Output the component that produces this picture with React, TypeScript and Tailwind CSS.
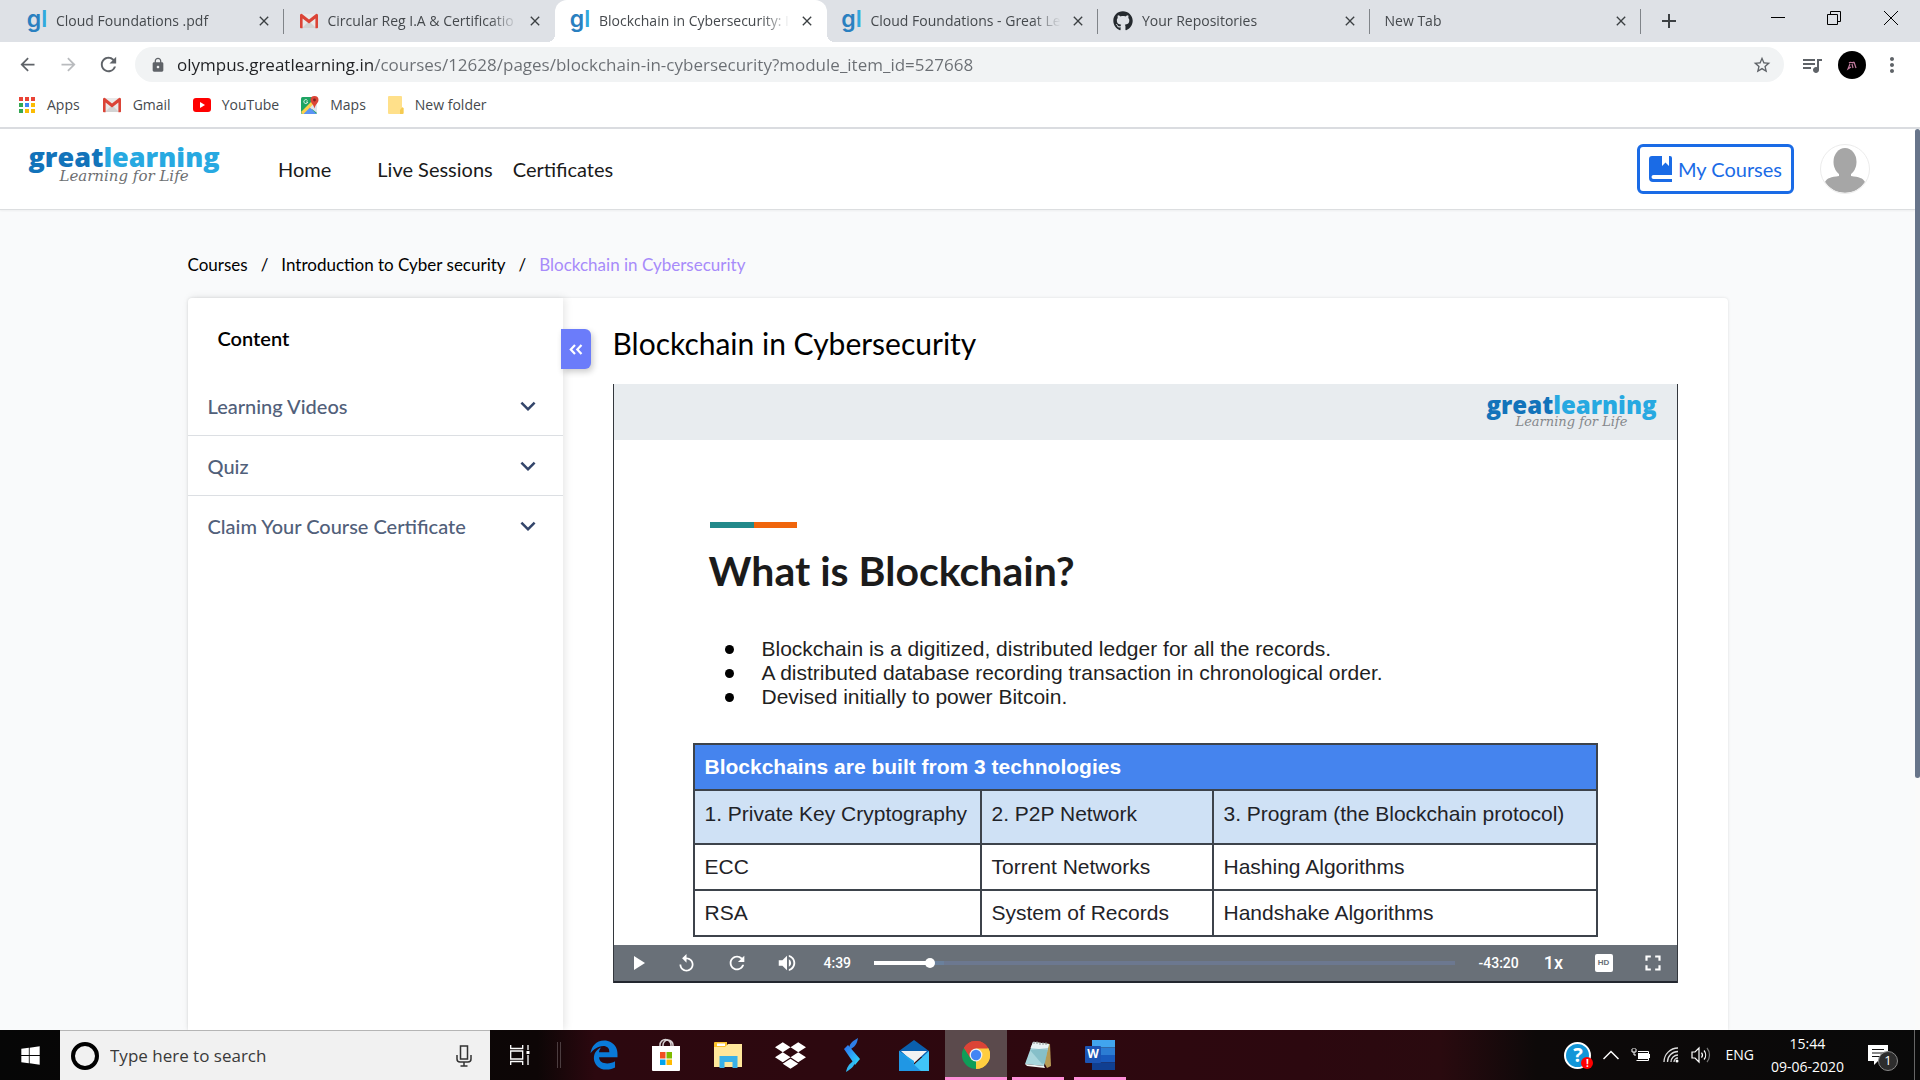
import React from "react";
import { FaGithub, FaDropbox, FaWindows } from "react-icons/fa";
import { FaEdgeLegacy } from "react-icons/fa6";
import {
  MdArrowBack, MdArrowForward, MdRefresh, MdLock, MdStarBorder, MdQueueMusic, MdMoreVert,
  MdReplay, MdVolumeUp, MdPlayArrow, MdFullscreen, MdClose, MdAdd, MdKeyboardArrowDown,
} from "react-icons/md";

const UI = "font-['Open_Sans',sans-serif]";

/* ---------- logos ---------- */

function GlMark() {
  return (
    <span aria-hidden="true" className="flex h-6 w-5 shrink-0 items-center justify-center pb-1 font-['Inter',sans-serif] text-[23px] leading-5 font-semibold">
      <span className="text-[#2a80c0]">g</span>
      <span className="text-[#2fa9dd]">l</span>
    </span>
  );
}

function GmailIcon() {
  return (
    <svg viewBox="0 0 20 16" className="h-4 w-5 shrink-0" aria-hidden="true">
      <rect x="1" y="1" width="18" height="14" rx="1" fill="#e9e9e9" />
      <path d="M3 15 10 8l7 7z" fill="#d3d3d3" />
      <path d="M1 2v12.5a.8.8 0 0 0 .8.8H3.6V5.4L10 10.4l6.4-5v9.9h1.8a.8.8 0 0 0 .8-.8V2a1.3 1.3 0 0 0-2-1L10 6.4 3 1a1.3 1.3 0 0 0-2 1z" fill="#db4437" />
    </svg>
  );
}

function AppsIcon() {
  const colors = ["#ea4335", "#ea4335", "#ea4335", "#34a853", "#4285f4", "#fbbc04", "#34a853", "#fbbc04", "#fbbc04"];
  return (
    <svg viewBox="0 0 17 17" className="h-[17px] w-[17px] shrink-0" aria-hidden="true">
      {colors.map((c, i) => (
        <rect key={i} x={(i % 3) * 6} y={Math.floor(i / 3) * 6} width="4" height="4" fill={c} />
      ))}
    </svg>
  );
}

function YouTubeIcon() {
  return (
    <svg viewBox="0 0 18 14" className="h-3.5 w-[18px] shrink-0" aria-hidden="true">
      <rect width="18" height="14" rx="3" fill="#f00" />
      <path d="M7 4v6l5-3z" fill="#fff" />
    </svg>
  );
}

function MapsIcon() {
  return (
    <svg viewBox="0 0 18 18" className="h-[18px] w-[18px] shrink-0" aria-hidden="true">
      <rect x="0" y="1" width="16" height="17" rx="1.5" fill="#1fa463" />
      <path d="M0 16 14 2l2 2v5L5 18H1.500z" fill="#ffd04b" />
      <path d="M2.500 18 9 11.500 15.500 18z" fill="#5b93f5" />
      <path d="M9 11.500 14 6.500l2 1V17z" fill="#dfe5ee" />
      <path d="M6.500 4.500a2 2 0 1 0 .3 1.500H5" fill="none" stroke="#fff" strokeWidth=".8" />
      <path d="M13.500 0a4 4 0 0 1 4 4c0 3-3 4-4 8.500-1-4.500-4-5.500-4-8.500a4 4 0 0 1 4-4z" fill="#db4437" />
      <circle cx="13.500" cy="4" r="1.400" fill="#7b231e" />
    </svg>
  );
}

function FolderIcon() {
  return (
    <svg viewBox="0 0 16 18" className="h-[18px] w-4 shrink-0" aria-hidden="true">
      <path d="M1 0h12a1 1 0 0 1 1 1v10l1.500 1v5a1 1 0 0 1-1 1H1a1 1 0 0 1-1-1V1a1 1 0 0 1 1-1z" fill="#ffe08a" />
      <path d="M12 18v-4l2-2.500L15.500 12v5a1 1 0 0 1-1 1z" fill="#f5cb52" />
    </svg>
  );
}

function ChromeIcon() {
  return (
    <svg viewBox="0 0 48 48" className="h-7 w-7" aria-hidden="true">
      <path d="M24 24 3.200 12A24 24 0 0 1 44.800 12z" fill="#db4437" />
      <path d="M24 24 44.800 12A24 24 0 0 1 24 48z" fill="#ffcd40" />
      <path d="M24 24v24A24 24 0 0 1 3.200 12z" fill="#0f9d58" />
      <path d="M24 13h20.200l.6-1A24 24 0 0 0 3.200 12l11.300 17.500z" fill="#db4437" />
      <path d="M24 13h21.300A24 24 0 0 1 24 48l9.500-18.500z" fill="#ffcd40" />
      <circle cx="24" cy="24" r="11" fill="#f1f1f1" />
      <circle cx="24" cy="24" r="8.800" fill="#4285f4" />
    </svg>
  );
}

function GreatLearningLogo({ small = false }: { small?: boolean }) {
  return (
    <div className="flex flex-col items-center">
      <div className={small ? "font-['Open_Sans',sans-serif] text-2xl leading-5 font-extrabold" : "font-['Open_Sans',sans-serif] text-[27px] leading-[22px] font-extrabold"}>
        <span className="text-[#1273ba]">great</span>
        <span className="text-[#27a9e1]">learning</span>
      </div>
      <div className={small ? "font-['DejaVu_Serif',serif] text-[13px] leading-[14px] text-[#85888c] italic" : "font-['DejaVu_Serif',serif] text-[15px] leading-4 text-[#6d6f72] italic"}>
        Learning for Life
      </div>
    </div>
  );
}

/* ---------- browser chrome ---------- */

type Tab = { title: string; icon: React.ReactNode; active?: boolean; divider?: boolean };

const tabs: Tab[] = [
  { title: "Cloud Foundations .pdf", icon: <GlMark />, divider: true },
  { title: "Circular Reg I.A & Certificatio", icon: <GmailIcon /> },
  { title: "Blockchain in Cybersecurity: I", icon: <GlMark />, active: true },
  { title: "Cloud Foundations - Great Le", icon: <GlMark />, divider: true },
  { title: "Your Repositories", icon: <FaGithub className="h-5 w-5 shrink-0 text-[#24292e]" />, divider: true },
  { title: "New Tab", icon: null, divider: true },
];

function TabStrip() {
  return (
    <div className="flex h-[42px] items-stretch bg-[#dee1e6] pl-3">
      <div className="flex w-[1629px] shrink">
        {tabs.map((t) => (
          <div
            key={t.title}
            className={
              t.active
                ? "relative flex min-w-0 flex-1 items-center gap-[9px] rounded-t-xl bg-white pr-3 pl-[15px]"
                : "relative flex min-w-0 flex-1 items-center gap-[9px] pr-3 pl-[15px]"
            }
          >
            {t.active && (
              <>
                <span className="absolute bottom-0 -left-2 h-2 w-2 bg-[radial-gradient(circle_at_0_0,transparent_8px,#fff_8px)]" />
                <span className="absolute -right-2 bottom-0 h-2 w-2 bg-[radial-gradient(circle_at_100%_0,transparent_8px,#fff_8px)]" />
              </>
            )}
            {t.icon}
            <span className="min-w-0 flex-1 overflow-hidden mask-r-from-85% text-sm whitespace-nowrap text-[#45494d]">{t.title}</span>
            <button aria-label={`Close ${t.title}`} className="shrink-0 text-[#3c4043]">
              <MdClose className="h-4 w-4" />
            </button>
            {t.divider && <span className="absolute right-0 h-[25px] w-px bg-[#808489]" />}
          </div>
        ))}
      </div>
      <button aria-label="New tab" className="ml-4 text-[#3c4043]">
        <MdAdd className="h-6 w-6" />
      </button>
      <div className="ml-auto flex items-start">
        <button aria-label="Minimize" className="flex h-9 w-14 items-center justify-center">
          <svg viewBox="0 0 14 14" className="h-3.5 w-3.5"><path d="M0 6.500h14" stroke="#000" /></svg>
        </button>
        <button aria-label="Restore" className="flex h-9 w-14 items-center justify-center">
          <svg viewBox="0 0 14 14" className="h-3.5 w-3.5" fill="none" stroke="#000"><path d="M.5 3.500h10v10H.5zM3.500 3.500v-3h10v10h-3" /></svg>
        </button>
        <button aria-label="Close window" className="flex h-9 w-[58px] items-center justify-center">
          <svg viewBox="0 0 14 14" className="h-3.5 w-3.5"><path d="M0 0 14 14M14 0 0 14" stroke="#000" /></svg>
        </button>
      </div>
    </div>
  );
}

function Toolbar() {
  return (
    <div className="flex h-[45px] items-center bg-white pr-4 pl-[17px] text-[#5f6368]">
      <button aria-label="Back" className="mr-5"><MdArrowBack className="h-[21px] w-[21px]" /></button>
      <button aria-label="Forward" className="mr-[18px] text-[#b9bbbe]"><MdArrowForward className="h-[21px] w-[21px]" /></button>
      <button aria-label="Reload" className="mr-[15px]"><MdRefresh className="h-[23px] w-[23px]" /></button>
      <div className="flex h-[35px] flex-1 items-center rounded-full bg-[#f1f3f4] pr-3 pl-[15px]">
        <MdLock className="mr-[11px] h-4 w-4 shrink-0" />
        <input
          aria-label="Address"
          readOnly
          value="olympus.greatlearning.in/courses/12628/pages/blockchain-in-cybersecurity?module_item_id=527668"
          className="min-w-0 flex-1 bg-[linear-gradient(to_right,#202124_198px,#6a6e73_198px)] bg-clip-text text-[17px] text-transparent outline-none"
        />
        <button aria-label="Bookmark this page"><MdStarBorder className="h-5 w-5" /></button>
      </div>
      <button aria-label="Media" className="ml-4"><MdQueueMusic className="h-6 w-6" /></button>
      <button aria-label="Profile" className="ml-3.5 flex h-7 w-7 items-center justify-center rounded-full bg-black">
        <svg viewBox="0 0 12 12" className="h-3 w-3" fill="none" stroke="#c07b9e" strokeWidth="1.200">
          <path d="M3 4c2-2 3 1 5-1M4 5l-2 5 3-2M8 3l2 6M6 5l1 4" />
        </svg>
      </button>
      <button aria-label="Menu" className="ml-3.5"><MdMoreVert className="h-6 w-6" /></button>
    </div>
  );
}

function Bookmarks() {
  const link = "flex items-center gap-[11px] text-sm text-[#45494d]";
  return (
    <nav aria-label="Bookmarks" className="flex h-[42px] items-center gap-[22px] border-b-2 border-[#dadce0] bg-white pb-1 pl-[19px]">
      <a href="#apps" className={link}><AppsIcon />Apps</a>
      <a href="#gmail" className={link}><GmailIcon />Gmail</a>
      <a href="#youtube" className={link}><YouTubeIcon />YouTube</a>
      <a href="#maps" className={link}><MapsIcon />Maps</a>
      <a href="#folder" className={link}><FolderIcon />New folder</a>
    </nav>
  );
}

/* ---------- page ---------- */

function SiteHeader() {
  return (
    <header className="flex h-[81px] shrink-0 items-center border-b border-[#dcdee0] bg-white pr-[45px] pl-[29px] shadow-xs">
      <a href="#home" className="w-[190px] pb-2"><GreatLearningLogo /></a>
      <nav className="ml-[59px] flex text-xl text-[#1a1a1a]">
        <a href="#home" className="mr-[46px]">Home</a>
        <a href="#live" className="mr-5">Live Sessions</a>
        <a href="#certificates">Certificates</a>
      </nav>
      <button className="ml-auto flex h-[50px] items-center gap-[5px] rounded-md border-3 border-[#1a6be6] px-[9px] text-xl text-[#1a6be6]">
        <svg viewBox="0 0 24 26" className="h-[26px] w-6" fill="#1a6be6" aria-hidden="true">
          <path d="M3 0h10v10l3.500-3.500L20 10V0h1a2 2 0 0 1 2 2v17H4.500a2 2 0 0 0 0 4H23v3H4a4 4 0 0 1-4-4V3a3 3 0 0 1 3-3z" />
        </svg>
        My Courses
      </button>
      <button aria-label="Account" className="ml-[26px] h-[50px] w-[50px] overflow-hidden rounded-full border border-[#ececec] bg-white">
        <svg viewBox="0 0 48 48" className="h-12 w-12" fill="#a6a6a6" aria-hidden="true">
          <ellipse cx="24" cy="17" rx="11.500" ry="14" />
          <path d="M18 27h12v4c8 1 12 2 14 6A24 24 0 0 1 4 37c2-4 6-5 14-6z" />
        </svg>
      </button>
    </header>
  );
}

function Sidebar() {
  return (
    <aside className="w-[375px] shrink-0 rounded-tl shadow-[2px_0_8px_rgba(0,0,0,0.1)]">
      <h2 className="px-[30px] pt-7 pb-[26px] text-xl leading-6 font-semibold text-black">Content</h2>
      <ul>
        {["Learning Videos", "Quiz", "Claim Your Course Certificate"].map((label) => (
          <li key={label} className="border-b border-[#dcdfe3] last:border-b-0">
            <button className="flex h-[59px] w-full items-center justify-between pr-5 pl-5 text-xl font-medium text-[#51607a]">
              {label}
              <MdKeyboardArrowDown className="h-[30px] w-[30px] text-[#33456a]" />
            </button>
          </li>
        ))}
      </ul>
    </aside>
  );
}

function SlideTable() {
  const cell = "border-2 border-[#3d434b] px-2.5";
  return (
    <table className="mt-[34px] w-full table-fixed border-collapse text-left text-[21px] leading-6 text-[#1f2328]">
      <colgroup>
        <col className="w-[287px]" />
        <col className="w-[232px]" />
        <col />
      </colgroup>
      <thead>
        <tr className="h-[46px] bg-[#4584ee] text-white">
          <th colSpan={3} className={cell + " font-bold"}>Blockchains are built from 3 technologies</th>
        </tr>
        <tr className="h-[54px] bg-[#cfe1f5]">
          <th className={cell + " pb-1.5 font-normal whitespace-nowrap"}>1. Private Key Cryptography</th>
          <th className={cell + " pb-1.5 font-normal"}>2. P2P Network</th>
          <th className={cell + " pb-1.5 font-normal"}>3. Program (the Blockchain protocol)</th>
        </tr>
      </thead>
      <tbody>
        <tr className="h-[46px]">
          <td className={cell}>ECC</td>
          <td className={cell}>Torrent Networks</td>
          <td className={cell}>Hashing Algorithms</td>
        </tr>
        <tr className="h-[46px]">
          <td className={cell}>RSA</td>
          <td className={cell}>System of Records</td>
          <td className={cell}>Handshake Algorithms</td>
        </tr>
      </tbody>
    </table>
  );
}

function PlayerControls() {
  return (
    <div className="flex h-[38px] items-center border-b-2 border-[#23272f] bg-[#697078] text-white">
      <button aria-label="Play" className="flex w-12 justify-center"><MdPlayArrow className="h-6 w-6" /></button>
      <button aria-label="Back 10 seconds" className="flex w-[50px] justify-center"><MdReplay className="h-[21px] w-[21px]" /></button>
      <button aria-label="Forward 10 seconds" className="flex w-[50px] justify-center"><MdRefresh className="h-[22px] w-[22px]" /></button>
      <button aria-label="Volume" className="flex w-[50px] justify-center"><MdVolumeUp className="h-[22px] w-[22px]" /></button>
      <span className="w-[62px] pl-3 font-['Roboto',sans-serif] text-sm font-medium">4:39</span>
      <input
        type="range"
        aria-label="Seek"
        defaultValue={9}
        className="h-1 min-w-0 flex-1 appearance-none bg-[linear-gradient(to_right,#fff_9.7%,#6a809c_9.7%,#6a809c_12%,#6c7890_12%)] [&::-webkit-slider-thumb]:h-2.5 [&::-webkit-slider-thumb]:w-2.5 [&::-webkit-slider-thumb]:appearance-none [&::-webkit-slider-thumb]:rounded-full [&::-webkit-slider-thumb]:bg-white"
      />
      <span className="w-[74px] pl-6 font-['Roboto',sans-serif] text-sm font-medium">-43:20</span>
      <button className="w-[50px] font-['Roboto',sans-serif] text-lg font-medium">1x</button>
      <button className="flex w-[50px] justify-center">
        <span className="flex h-[18px] w-[18px] items-center justify-center rounded-xs bg-white font-['Liberation_Sans',sans-serif] text-[8px] font-bold text-[#697078]">HD</span>
      </button>
      <button aria-label="Full screen" className="flex w-12 justify-center"><MdFullscreen className="h-[26px] w-[26px]" /></button>
    </div>
  );
}

function Player() {
  return (
    <section aria-label="Video" className="mt-5 border-x border-[#33373d]">
      <div className="flex h-14 items-start justify-end bg-[#e8ecef] pt-[11px] pr-5">
        <GreatLearningLogo small />
      </div>
      <div className="flex h-[505px] flex-col bg-white px-[79px] font-['Liberation_Sans',sans-serif]">
        <div className="mt-[82px] ml-[17px] flex h-1.5">
          <span className="w-11 bg-[#22898a]" />
          <span className="w-[43px] bg-[#f0650c]" />
        </div>
        <h2 className="mt-[19px] ml-4 font-['Lato',sans-serif] text-[41px] leading-[48px] font-bold text-[#1b1b1b]">What is Blockchain?</h2>
        <ul className="mt-[42px] ml-8 text-[21px] leading-6 text-[#1f1f1f]">
          {[
            "Blockchain is a digitized, distributed ledger for all the records.",
            "A distributed database recording transaction in chronological order.",
            "Devised initially to power Bitcoin.",
          ].map((t) => (
            <li key={t} className="flex items-center gap-7">
              <span className="h-[9px] w-[9px] rounded-full bg-black" />
              {t}
            </li>
          ))}
        </ul>
        <SlideTable />
      </div>
      <PlayerControls />
    </section>
  );
}

function CoursePage() {
  return (
    <div className="flex min-h-0 flex-1 overflow-hidden bg-[#f9fafb]">
      <div className="flex min-w-0 flex-1 flex-col font-['Lato',sans-serif]">
        <SiteHeader />
        <main className="mx-auto flex min-h-0 w-full max-w-[1540px] flex-1 flex-col">
          <nav aria-label="Breadcrumb" className="flex h-[88px] shrink-0 items-center gap-[13px] pt-[22px] text-[17px] text-black">
            <a href="#courses">Courses</a>
            <span>/</span>
            <a href="#intro">Introduction to Cyber security</a>
            <span>/</span>
            <a href="#blockchain" className="text-[#a78bfa]">Blockchain in Cybersecurity</a>
          </nav>
          <div className="flex min-h-0 flex-1 rounded-t bg-white shadow-[0_0_3px_rgba(0,0,0,0.12)]">
            <Sidebar />
            <article className="relative min-w-0 flex-1 pt-6 pr-[50px] pl-[50px]">
              <button aria-label="Collapse content" className="absolute top-[31px] -left-0.5 flex h-10 w-[30px] items-center justify-center rounded-r-md bg-[#6b7cfa] shadow-[2px_3px_6px_rgba(0,0,0,0.2)]">
                <svg viewBox="0 0 14 11" className="h-[11px] w-3.5" fill="none" stroke="#fff" strokeWidth="2.200" aria-hidden="true">
                  <path d="M6 1 1.800 5.500 6 10M12.500 1 8.300 5.500l4.200 4.500" />
                </svg>
              </button>
              <h1 className="text-[30px] leading-[42px] text-black">Blockchain in Cybersecurity</h1>
              <Player />
            </article>
          </div>
        </main>
      </div>
      <div className="w-[5px] shrink-0 bg-[#fafafa]">
        <div className="h-[72%] rounded-sm bg-[#67748a]" />
      </div>
    </div>
  );
}

/* ---------- taskbar ---------- */

function StoreIcon() {
  return (
    <svg viewBox="0 0 30 34" className="h-[34px] w-[30px]" aria-hidden="true">
      <path d="M9 9V7a5 5 0 0 1 11 0v2M12 9V7a5 5 0 0 1 10 0v2" fill="none" stroke="#d5cfd1" strokeWidth="1.500" />
      <path d="M1 8h28v24a1 1 0 0 1-1 1H2a1 1 0 0 1-1-1z" fill="#fff" />
      <path d="M9 14h5.500v6.500H9z" fill="#f25022" />
      <path d="M15.500 14H21v6.500h-5.500z" fill="#7fba00" />
      <path d="M9 21.500h5.500V27H9z" fill="#00a4ef" />
      <path d="M15.500 21.500H21V27h-5.500z" fill="#ffb900" />
    </svg>
  );
}

function ExplorerIcon() {
  return (
    <svg viewBox="0 0 28 26" className="h-[26px] w-7" aria-hidden="true">
      <path d="M0 1a1 1 0 0 1 1-1h12v6H0z" fill="#fcc32c" />
      <rect x="3" y="1.500" width="8" height="2.500" fill="#fff" />
      <path d="M0 5h11l3-3h14v23H0z" fill="#ffe79b" />
      <path d="M5.500 14h18v12h-5v-6h-8v6h-5z" fill="#38b1e8" />
    </svg>
  );
}

function BoltIcon() {
  return (
    <svg viewBox="0 0 16 34" className="h-[34px] w-4" aria-hidden="true">
      <defs>
        <linearGradient id="bolt" x1="0" y1="0" x2="1" y2="1">
          <stop offset="0" stopColor="#2a6df0" />
          <stop offset="1" stopColor="#2fe0fb" />
        </linearGradient>
      </defs>
      <path d="M14 0C7 4 5 6 5 13l2-2c5-3 6-6 7-11z" fill="#2f7ee6" />
      <path d="M0 11l4-4 12 14-5 6z" fill="url(#bolt)" />
      <path d="M2 34c7-4 9-7 10-14l-4 4c-4 3-5 6-6 10z" fill="#31b8f2" />
    </svg>
  );
}

function MailIcon() {
  return (
    <svg viewBox="0 0 30 31" className="h-[31px] w-[30px]" aria-hidden="true">
      <path d="M0 11 15 0l15 11v6H0z" fill="#0a5fae" />
      <path d="M2 11h26L15 23z" fill="#f2f2f2" />
      <path d="M0 11l15 10v10H0z" fill="#1ea4ea" />
      <path d="M30 11 8 31h22z" fill="#40c4f8" />
      <path d="M0 11 22 31H0z" fill="#2097e4" />
    </svg>
  );
}

function NotepadIcon() {
  return (
    <svg viewBox="0 0 28 28" className="h-[30px] w-7" aria-hidden="true">
      <path d="M9 1 26 3l1 22-4 2z" fill="#b79a55" />
      <path d="M9 1l16 2-5 22-19-2z" fill="#a8d5dc" />
      <path d="M9 1l16 2-1.500 6L6.500 7z" fill="#e8f3f4" />
      <path d="M1 23l19 2 1 2-18-2z" fill="#f2f6f6" />
      <path d="M6 9 18 23l3-1L24 7z" fill="#6fb0bd" opacity=".6" />
      <path d="M10 0v3M13 0v3M16 1v3M19 1v3M22 1v3" stroke="#777" strokeWidth=".8" />
    </svg>
  );
}

function WordIcon() {
  return (
    <span className="relative block h-[30px] w-[30px]" aria-hidden="true">
      <svg viewBox="0 0 30 30" className="h-[30px] w-[30px]">
        <path d="M7 0h23v7.500H7z" fill="#41a5ee" />
        <path d="M7 7.500h23V15H7z" fill="#2b7cd3" />
        <path d="M7 15h23v7.500H7z" fill="#185abd" />
        <path d="M7 22.500h23V30H7z" fill="#103f91" />
        <rect y="6" width="16" height="17" rx="1" fill="#1b54b4" />
      </svg>
      <span className="absolute top-1.5 left-0 w-4 text-center text-xs leading-4 font-bold text-white">W</span>
    </span>
  );
}

const apps: { name: string; icon: React.ReactNode; state?: "active" | "open" }[] = [
  { name: "Edge", icon: <FaEdgeLegacy className="h-[30px] w-[30px] text-[#0a7ad8]" /> },
  { name: "Store", icon: <StoreIcon /> },
  { name: "File Explorer", icon: <ExplorerIcon /> },
  { name: "Dropbox", icon: <FaDropbox className="h-[31px] w-[31px] text-white" /> },
  { name: "Launcher", icon: <BoltIcon /> },
  { name: "Mail", icon: <MailIcon /> },
  { name: "Chrome", icon: <ChromeIcon />, state: "active" },
  { name: "Notepad", icon: <NotepadIcon />, state: "open" },
  { name: "Word", icon: <WordIcon />, state: "open" },
];

function Taskbar() {
  return (
    <footer className="flex h-[50px] shrink-0 items-stretch bg-[linear-gradient(to_right,#060606_0%,#0d0606_28%,#2c080f_31%,#2e080f_55%,#2c080f_68%,#2a0a0f_75%,#0d0909_80%,#090909_100%)] text-white">
      <button aria-label="Start" className="flex w-[60px] items-center justify-center">
        <FaWindows className="h-[21px] w-[21px]" />
      </button>
      <label className="flex w-[430px] items-center border-t border-[#b5b5b5] bg-[#f1f1f1] pr-[18px] pl-[11px]">
        <span className="h-7 w-7 shrink-0 rounded-full border-4 border-black" />
        <input type="text" aria-label="Search" placeholder="Type here to search" className="ml-[11px] min-w-0 flex-1 bg-transparent text-[17px] text-[#3a3a3a] outline-none placeholder:text-[#3a3a3a]" />
        <svg viewBox="0 0 16 22" className="h-[22px] w-4" fill="none" stroke="#333" strokeWidth="1.500" aria-hidden="true">
          <path d="M4.500 1h7v13h-7zM1 10v4a3 3 0 0 0 3 3h8a3 3 0 0 0 3-3v-4M8 17v4M4.500 21h7" />
        </svg>
      </label>
      <button aria-label="Task view" className="flex w-[60px] items-center justify-center">
        <svg viewBox="0 0 20 20" className="h-5 w-5" fill="none" stroke="#fff" strokeWidth="1.300" aria-hidden="true">
          <path d="M.7 0v3.500h12V0M.7 6h12v8H.7zM.7 20v-3.500h12V20M18 0v5M18 10v10" />
          <rect x="16.500" y="6" width="3" height="3" fill="#fff" stroke="none" />
        </svg>
      </button>
      <span className="mx-[7px] h-[26px] w-1 self-center border-x border-[#4c3d40]" />
      <div className="ml-[5px] flex">
        {apps.map((a) => (
          <button
            key={a.name}
            aria-label={a.name}
            className={
              a.state === "active"
                ? "relative flex w-[62px] items-center justify-center bg-[#5b4a4c]"
                : "relative flex w-[62px] items-center justify-center"
            }
          >
            {a.icon}
            {a.state === "active" && <span className="absolute inset-x-0 bottom-0 h-[3px] bg-[#ff8fd8]" />}
            {a.state === "open" && <span className="absolute inset-x-[5px] bottom-0 h-[3px] bg-[#ff8fd8]" />}
          </button>
        ))}
      </div>
      <div className="ml-auto flex items-center">
        <button aria-label="Get help" className="relative mr-3 flex h-[27px] w-[27px] items-center justify-center rounded-full border-2 border-white bg-[#1296d8] text-xl leading-none font-bold">
          ?
          <span className="absolute -right-1 -bottom-0.5 flex h-3 w-3 items-center justify-center rounded-full bg-[#f00] text-[10px]">!</span>
        </button>
        <svg viewBox="0 0 16 10" className="mr-3 h-2.5 w-4" fill="none" stroke="#fff" strokeWidth="1.500" aria-hidden="true"><path d="M.5 9 8 1.500 15.500 9" /></svg>
        <svg viewBox="0 0 20 14" className="mr-3 h-3.5 w-5" fill="none" stroke="#fff" aria-hidden="true">
          <path d="M1 1v3h4V1M2 0v1M4 0v1M3 4v3h2M5.500 12.500h12v-9H7M18.500 6v4" />
          <rect x="7" y="5" width="10" height="6" fill="#fff" stroke="none" />
        </svg>
        <svg viewBox="0 0 16 16" className="mr-3 h-4 w-4" fill="none" stroke="#ddd" strokeWidth="1.300" aria-hidden="true">
          <path d="M1 15A14 14 0 0 1 15 1M4.500 15A10.500 10.500 0 0 1 15 4.500M8 15a7 7 0 0 1 7-7" />
          <path d="M11 15a4 4 0 0 1 4-4" />
          <circle cx="14" cy="14" r="1.500" fill="#fff" stroke="none" />
        </svg>
        <svg viewBox="0 0 20 18" className="mr-3.5 h-[18px] w-5" fill="none" stroke="#fff" strokeWidth="1.200" aria-hidden="true">
          <path d="M1 6h3l4-4v14l-4-4H1z" />
          <path d="M10.500 6.500a4 4 0 0 1 0 5M13 4.500a7 7 0 0 1 0 9" />
          <path d="M16 2a11 11 0 0 1 0 14" stroke="#777" />
        </svg>
        <span className="mr-[17px] text-sm">ENG</span>
        <div className="text-center text-sm leading-[23px]">
          <div>15:44</div>
          <div>09-06-2020</div>
        </div>
        <button aria-label="Notifications" className="relative ml-6 h-6 w-8">
          <svg viewBox="0 0 20 20" className="h-5 w-5" aria-hidden="true">
            <path d="M0 0h20v16H10l-4 4v-4H0z" fill="#fff" />
            <path d="M4 4.500h12M4 8h12M4 11.500h8" stroke="#111" />
          </svg>
          <span className="absolute top-2 left-2.5 flex h-5 w-5 items-center justify-center rounded-full border border-[#888] bg-[#2d2d2d] text-[13px]">1</span>
        </button>
        <span className="ml-3.5 h-[50px] w-1.5 border-l border-[#666]" />
      </div>
    </footer>
  );
}

export default function App() {
  return (
    <div className={UI + " flex h-screen flex-col overflow-hidden bg-white"}>
      <TabStrip />
      <Toolbar />
      <Bookmarks />
      <CoursePage />
      <Taskbar />
    </div>
  );
}
